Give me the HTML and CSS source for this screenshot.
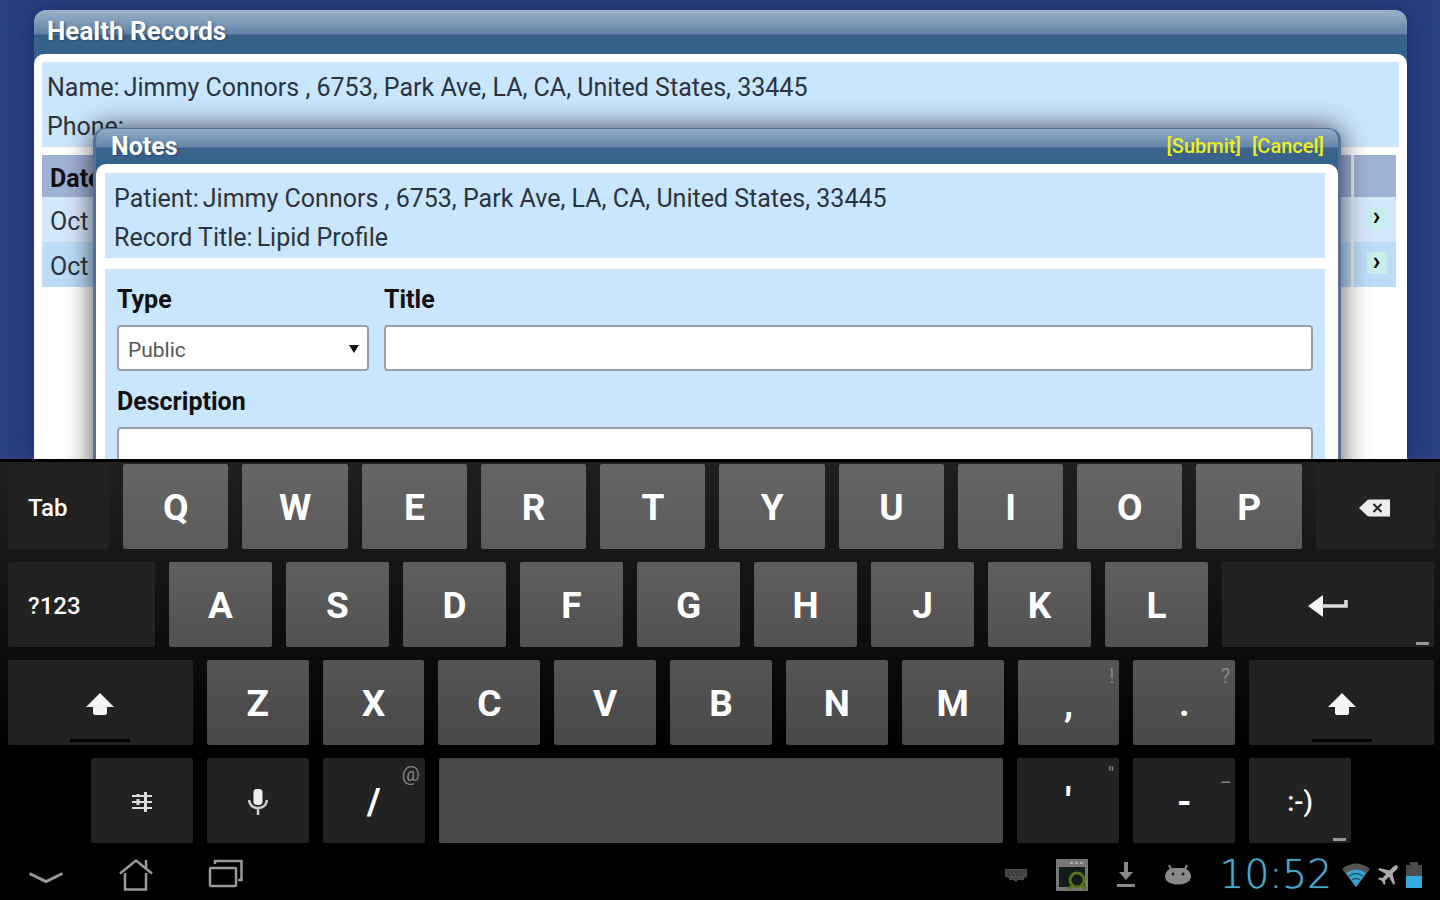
FILE: index.html
```
<!DOCTYPE html>
<html lang="en">
<head>
    <meta charset="UTF-8">
    <meta name="viewport" content="width=device-width, initial-scale=1.0">
    <title>Health Records</title>
    <link rel="stylesheet" href="styles.css">
</head>
<body>
    <main class="app">
        <section class="window">
            <h1 class="window-title">Health Records</h1>
            <div class="window-body">
                <dl class="info">
                    <div><dt>Name:</dt><dd>Jimmy Connors , 6753, Park Ave, LA, CA, United States, 33445</dd></div>
                    <div><dt>Phone:</dt><dd></dd></div>
                </dl>
                <table class="records">
                    <thead>
                        <tr><th>Date</th><th class="open-col"></th></tr>
                    </thead>
                    <tbody>
                        <tr><td>Oct</td><td class="open-col"><a class="open" href="#" aria-label="Open record">›</a></td></tr>
                        <tr><td>Oct</td><td class="open-col"><a class="open" href="#" aria-label="Open record">›</a></td></tr>
                    </tbody>
                </table>
            </div>
        </section>

        <!-- Notes dialog, lies over the records -->
        <form class="dialog">
            <header class="dialog-title">
                <h2>Notes</h2>
                <nav class="dialog-links">
                    <a href="#">[Submit]</a>
                    <a href="#">[Cancel]</a>
                </nav>
            </header>
            <div class="dialog-body">
                <dl class="info">
                    <div><dt>Patient:</dt><dd>Jimmy Connors , 6753, Park Ave, LA, CA, United States, 33445</dd></div>
                    <div><dt>Record Title:</dt><dd>Lipid Profile</dd></div>
                </dl>
                <div class="fields">
                    <div class="field">
                        <label for="type">Type</label>
                        <div class="select">
                            <select id="type">
                                <option>Public</option>
                                <option>Private</option>
                            </select>
                        </div>
                    </div>
                    <div class="field">
                        <label for="title">Title</label>
                        <input type="text" id="title">
                    </div>
                    <div class="field field-wide">
                        <label for="description">Description</label>
                        <textarea id="description" rows="5"></textarea>
                    </div>
                </div>
            </div>
        </form>
    </main>

    <section class="keyboard" aria-label="Keyboard">
        <div class="row row-1">
            <button class="key dark word tab">Tab</button>
            <button class="key">Q</button>
            <button class="key">W</button>
            <button class="key">E</button>
            <button class="key">R</button>
            <button class="key">T</button>
            <button class="key">Y</button>
            <button class="key">U</button>
            <button class="key">I</button>
            <button class="key">O</button>
            <button class="key">P</button>
            <button class="key dark backspace" aria-label="Backspace">
                <svg width="32" height="18" viewBox="0 0 32 18"><path fill="#eee" d="M0 9 8 1.500Q9 .5 11 .5H31V17.500H11Q9 17.500 8 16.500Z"/><path stroke="#222" stroke-width="2" d="m14.500 5 8 8m0-8-8 8"/></svg>
            </button>
        </div>
        <div class="row row-2">
            <button class="key dark word symbols">?123</button>
            <button class="key">A</button>
            <button class="key">S</button>
            <button class="key">D</button>
            <button class="key">F</button>
            <button class="key">G</button>
            <button class="key">H</button>
            <button class="key">J</button>
            <button class="key">K</button>
            <button class="key">L</button>
            <button class="key dark enter" aria-label="Enter">
                <svg width="40" height="22" viewBox="0 0 40 22"><path fill="#f4f4f4" d="M0 11 15 0V22Z"/><path fill="none" stroke="#ddd" stroke-width="3.500" d="M14 11H38V5"/></svg>
                <span class="more"></span>
            </button>
        </div>
        <div class="row row-3">
            <button class="key dark shift" aria-label="Shift">
                <svg width="28" height="22" viewBox="0 0 28 22"><path fill="#f4f4f4" d="M14 0 28 14H21V20Q21 22 19 22H9Q7 22 7 20V14H0Z"/></svg>
            </button>
            <button class="key">Z</button>
            <button class="key">X</button>
            <button class="key">C</button>
            <button class="key">V</button>
            <button class="key">B</button>
            <button class="key">N</button>
            <button class="key">M</button>
            <button class="key">,<span class="hint">!</span></button>
            <button class="key">.<span class="hint">?</span></button>
            <button class="key dark shift" aria-label="Shift">
                <svg width="28" height="22" viewBox="0 0 28 22"><path fill="#f4f4f4" d="M14 0 28 14H21V20Q21 22 19 22H9Q7 22 7 20V14H0Z"/></svg>
            </button>
        </div>
        <div class="row row-4">
            <span class="blank"></span>
            <button class="key dark" aria-label="Settings">
                <svg width="20" height="20" viewBox="0 0 20 20" fill="none" stroke="#ddd" stroke-width="2"><path d="M0 4H20M0 10H20M0 16H20"/><path stroke-width="3" d="M13.500 0V20M6 7V13M6 2V5"/></svg>
            </button>
            <button class="key dark" aria-label="Voice input">
                <svg width="20" height="26" viewBox="0 0 20 26"><rect x="5.500" y="0" width="9" height="16" rx="3.500" fill="#eee"/><path fill="none" stroke="#ccc" stroke-width="2.500" d="M1 11Q2 19 10 19T19 11M10 19V26"/></svg>
            </button>
            <button class="key dark">/<span class="hint">@</span></button>
            <button class="key space" aria-label="Space"></button>
            <button class="key dark">'<span class="hint">"</span></button>
            <button class="key dark">-<span class="hint">_</span></button>
            <button class="key dark smiley">:-)<span class="more"></span></button>
            <span class="blank"></span>
        </div>
    </section>

    <footer class="system-bar">
        <nav class="system-nav">
            <a href="#" aria-label="Hide keyboard">
                <svg width="36" height="34" viewBox="0 0 36 34"><path fill="none" stroke="#999" stroke-width="3" d="M1.500 15.500 18 23.500 34.500 15.500"/></svg>
            </a>
            <a href="#" aria-label="Home">
                <svg width="34" height="34" viewBox="0 0 34 34" fill="none" stroke="#999" stroke-width="2.500"><path d="M1 15.500 17 2.500 33 15.500M27 10V2M6 15V31.500H27V15"/></svg>
            </a>
            <a href="#" aria-label="Recent apps">
                <svg width="36" height="34" viewBox="0 0 36 34" fill="none" stroke="#999" stroke-width="2.500"><rect x="2" y="10" width="26" height="18" rx="1"/><path d="M7 6V3H33.500V22H30"/></svg>
            </a>
        </nav>
        <div class="status">
            <svg class="st-keyboard" width="24" height="14" viewBox="0 0 24 14"><path fill="#484848" d="M1 1H23V9L20 10V12H14L12 14 9 12H5V10L1 9Z"/><path stroke="#222" stroke-width="1" stroke-dasharray="2 2" d="M3 4H21M4 7H20"/></svg>
            <svg class="st-shot" width="32" height="32" viewBox="0 0 32 32"><path fill="#777" d="M0 0H32V32H0ZM3 8V28H29V8Z"/><path stroke="#aaa" stroke-width="2" stroke-dasharray="3 2" d="M14 4H29"/><path fill="#111b1a" d="M3 8H29V28H3Z"/><circle cx="21" cy="21" r="7" fill="none" stroke="#53721c" stroke-width="3"/><path stroke="#53721c" stroke-width="3" d="m25 25 5 5M13 30l4-5"/></svg>
            <svg class="st-download" width="20" height="26" viewBox="0 0 20 26"><path fill="#888" d="M8 0H12V10H17L10 18 3 10H8ZM1 22H19V25H1Z"/></svg>
            <svg class="st-android" width="28" height="22" viewBox="0 0 28 22"><path stroke="#888" stroke-width="2" d="m5 1 3 6M23 1l-3 6"/><path fill="#888" d="M1 12Q2 5 9 4H19Q26 5 27 12 27 17 22 19 14 22 6 19 1 17 1 12Z"/><circle cx="9" cy="10" r="1.500" fill="#222"/><circle cx="19" cy="10" r="1.500" fill="#222"/></svg>
            <time class="clock">10:52</time>
            <svg class="st-wifi" width="28" height="24" viewBox="0 0 28 24"><path fill="#555" d="M0 6Q14-5 28 6L14 24Z"/><path fill="#38a3cf" d="M4 10Q14 3 24 10L14 24Z"/><path fill="none" stroke="#17506b" stroke-width="1.500" d="M7 13Q14 8 21 13M10 17Q14 14 18 17"/></svg>
            <svg class="st-plane" width="20" height="20" viewBox="0 0 20 20"><path fill="#aaa" d="M19.500.5Q21 3 16 7L14.500 8.500 17 18.500 15.500 20 11 12 7 15.500 7.500 18.500 6 20 4 16 0 14 1.500 12.500 4.500 13 8 9 0 4.500 1.500 3 11.500 5.500 13 4Q17-1 19.500.5Z"/></svg>
            <svg class="st-battery" width="16" height="26" viewBox="0 0 16 26"><path fill="#4b4b4b" d="M4 0H12V3H16V14H0V3H4Z"/><path fill="#33a9dc" d="M0 14H16V26H0Z"/></svg>
        </div>
    </footer>
</body>
</html>
```
FILE: styles.css
```
* {
    box-sizing: border-box;
}

body {
    display: flex;
    flex-direction: column;
    height: 100vh;
    margin: 0;
    background: #000;
    color: #2b3440;
    font-family: Roboto, "Liberation Sans", sans-serif;
    font-size: 25px;
}

h1, h2, dl, dd {
    margin: 0;
}

a {
    text-decoration: none;
}

svg {
    display: block;
}

/* Records page */
.app {
    position: relative;
    flex: 1;
    min-height: 0;
    overflow: hidden;
    padding: 10px 33px 0 34px;
    background: #294084;
}

.window {
    display: flex;
    flex-direction: column;
    height: 100%;
    border-radius: 12px 12px 0 0;
    background: linear-gradient(#9bb3c8 0, #6182a6 24px, #3a6088 25px, #33628b 44px);
    box-shadow: 0 0 24px #1c2a60;
}

.window-title {
    height: 44px;
    padding-left: 13px;
    color: #fff;
    font-size: 26px;
    line-height: 43px;
    text-shadow: 1px 1px 2px #2d4a6c;
}

.window-body {
    flex: 1;
    padding: 8px;
    border-radius: 10px 10px 0 0;
    background: #fff;
}

.info {
    height: 85px;
    padding: 6px 5px 0;
    background: #cae5fe;
    line-height: 39px;
}

.info div {
    display: flex;
    gap: 4px;
}

.records {
    width: calc(100% - 3px);
    margin-top: 8px;
    border-collapse: collapse;
}

.records th,
.records td {
    height: 45px;
    padding: 4px 8px 0;
    text-align: left;
}

.records th {
    height: 42px;
    background: #9fb2d6;
    color: #111;
}

.records td {
    background: #d4e8fb;
}

.records tr:last-child td {
    background: #bcdcf8;
}

.records .open-col {
    width: 44px;
    padding: 0 8px 4px 13px;
    border-left: 3px solid #eee;
}

.open {
    display: block;
    width: 20px;
    height: 22px;
    background: #c8eeec;
    color: #000;
    font-weight: bold;
    line-height: 20px;
    text-align: center;
}

/* Notes dialog */
.dialog {
    position: absolute;
    top: 128px;
    right: 99px;
    left: 93px;
    border: solid #54709b;
    border-width: 1px 3px 0;
    border-radius: 12px 12px 0 0;
    background: linear-gradient(#91abc6 0, #6485aa 18px, #3d638b 19px, #33628b 35px);
    box-shadow: 0 0 28px rgba(0, 0, 0, 0.7);
}

.dialog-title {
    display: flex;
    justify-content: space-between;
    height: 35px;
    padding: 0 14px 0 15px;
    line-height: 35px;
}

.dialog-title h2 {
    color: #fff;
    font-size: 25px;
    text-shadow: 1px 1px 2px #2d4a6c;
}

.dialog-links {
    display: flex;
    gap: 11px;
}

.dialog-links a {
    color: #eef01c;
    font-size: 20px;
    font-weight: 500;
}

.dialog-body {
    padding: 9px 13px 9px 9px;
    border-radius: 10px 10px 0 0;
    background: #fff;
}

.dialog-body .info {
    padding: 6px 9px 0;
}

.fields {
    display: grid;
    grid-template-columns: 252px 1fr;
    gap: 8px 15px;
    margin-top: 11px;
    padding: 8px 12px;
    background: #cae5fe;
}

.field {
    display: flex;
    flex-direction: column;
}

.field-wide {
    grid-column: 1 / -1;
}

.field label {
    height: 48px;
    color: #111;
    font-weight: bold;
    line-height: 45px;
}

.field input,
.field select,
.field textarea {
    width: 100%;
    height: 46px;
    padding: 4px 9px 0;
    border: 2px solid #999fa8;
    border-radius: 4px;
    background: #fff;
    color: #555;
    font: inherit;
    font-size: 21px;
}

.field textarea {
    height: 180px;
    resize: none;
}

.select {
    position: relative;
}

.select select {
    appearance: none;
}

.select::after {
    content: "";
    position: absolute;
    top: 20px;
    right: 10px;
    border: solid transparent;
    border-width: 8px 5px 0;
    border-top-color: #111;
    pointer-events: none;
}

/* Keyboard */
.keyboard {
    display: flex;
    flex-direction: column;
    gap: 13px;
    padding: 2px 6px 7px 8px;
    border-top: 3px solid #000;
    background: linear-gradient(#202020, #0c0c0c 50%, #000 75%);
}

.row {
    display: flex;
    gap: 14px;
}

.key {
    position: relative;
    display: flex;
    flex: 102 1 0;
    align-items: center;
    justify-content: center;
    min-width: 0;
    height: 85px;
    padding: 2px 0 0;
    border: 0;
    border-radius: 2px;
    color: #fff;
    font-family: inherit;
    font-size: 37px;
    font-weight: bold;
}

.row-1 .key {
    flex-grow: 105;
    background: linear-gradient(#656565, #5b5b5b);
}

.row-2 .key {
    flex-grow: 103;
    background: linear-gradient(#5e5e5e, #515151);
}

.row-3 .key {
    background: linear-gradient(#555, #484848);
}

.row .dark {
    background: #222;
}

.row .tab {
    flex-grow: 101;
}

.row .backspace {
    flex-grow: 118;
}

.row .symbols {
    flex-grow: 147;
}

.row .enter {
    flex-grow: 212;
}

.row .shift {
    flex-grow: 185;
}

.row .space {
    flex-grow: 565;
    background: #484848;
}

.blank {
    flex: 69 1 0;
}

.word {
    justify-content: flex-start;
    font-size: 24px;
    font-weight: 500;
    text-indent: 20px;
}

.smiley {
    font-size: 27px;
    font-weight: 500;
}

.hint {
    position: absolute;
    top: 4px;
    right: 5px;
    color: #858585;
    font-size: 20px;
    font-weight: normal;
    line-height: 24px;
}

.more {
    position: absolute;
    right: 5px;
    bottom: 2px;
    width: 13px;
    height: 3px;
    background: #999;
}

.shift::after {
    content: "";
    position: absolute;
    bottom: 3px;
    width: 60px;
    height: 3px;
    background: #000;
}

/* System bar */
.system-bar {
    display: flex;
    align-items: center;
    justify-content: space-between;
    height: 50px;
    padding: 0 18px 0 28px;
    background: #000;
}

.system-nav {
    display: flex;
    gap: 55px;
}

.status {
    display: flex;
    align-items: center;
    gap: 28px;
}

.clock {
    margin-right: -18px;
    color: #4aa9cb;
    font-family: "DejaVu Sans", sans-serif;
    font-size: 39px;
    font-weight: 200;
    line-height: 50px;
    text-shadow: 0 0 1px #4aa9cb;
}

.st-wifi,
.st-plane {
    margin-right: -20px;
}
```
